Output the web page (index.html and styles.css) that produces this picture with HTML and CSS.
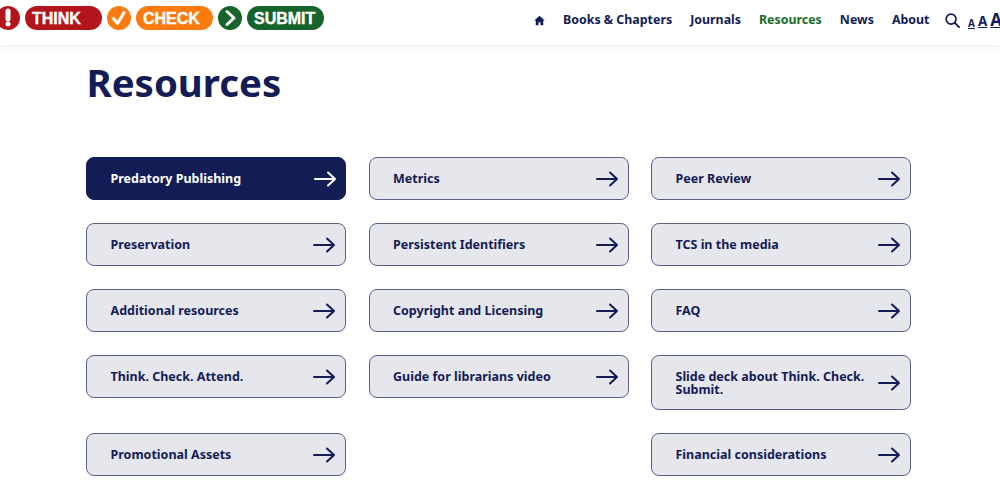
FILE: index.html
```html
<!DOCTYPE html>
<html lang="en">
<head>
    <meta charset="UTF-8">
    <meta name="viewport" content="width=device-width, initial-scale=1.0">
    <title>Resources</title>
    <link rel="stylesheet" href="styles.css">
</head>
<body>
    <header class="site-header">
        <div class="logo">
            <svg class="logo-icon logo-icon-first" viewBox="0 0 24 24"><circle cx="12" cy="12" r="12" fill="#b2151b"/><path d="M12 5v8" stroke="#fff" stroke-width="5" stroke-linecap="round"/><circle cx="12" cy="18" r="2.5" fill="#fff"/></svg>
            <span class="logo-pill think">THINK</span>
            <svg class="logo-icon" viewBox="0 0 24 24"><circle cx="12" cy="12" r="12" fill="#fd7a0e"/><path d="M6.5 12.5l4 5L17 6.5" fill="none" stroke="#fff" stroke-width="3" stroke-linecap="round" stroke-linejoin="round"/></svg>
            <span class="logo-pill check">CHECK</span>
            <svg class="logo-icon" viewBox="0 0 24 24"><circle cx="12" cy="12" r="12" fill="#17642a"/><path d="M9 5.500l7 6.500-7 6.500" fill="none" stroke="#fff" stroke-width="3" stroke-linecap="round" stroke-linejoin="round"/></svg>
            <span class="logo-pill submit">SUBMIT</span>
        </div>
        <nav class="main-nav">
            <a class="nav-home" href="#"><svg viewBox="0 0 12 12" width="11" height="11"><path d="M6 .8L.3 6h1.600v5.200h3V7.800h2.200v3.400h3V6h1.600z" fill="#131c55"/></svg></a>
            <a href="#">Books &amp; Chapters</a>
            <a href="#">Journals</a>
            <a class="active" href="#">Resources</a>
            <a href="#">News</a>
            <a href="#">About</a>
        </nav>
        <div class="tools">
            <svg class="search-icon" viewBox="0 0 16 16" width="15" height="15"><circle cx="6.500" cy="6.500" r="5.300" fill="none" stroke="#131c55" stroke-width="1.800"/><path d="M10.500 10.500L15 15" stroke="#131c55" stroke-width="2" stroke-linecap="round"/></svg>
            <a class="size size-s" href="#">A</a>
            <a class="size size-m" href="#">A</a>
            <a class="size size-l" href="#">A</a>
        </div>
    </header>

    <main class="content">
        <h1>Resources</h1>
        <div class="link-grid">
            <a class="link-card selected" href="#"><span>Predatory Publishing</span><svg viewBox="0 0 24 16"><path d="M2 8h20M15 1.500L22 8l-7 6.500"/></svg></a>
            <a class="link-card" href="#"><span>Metrics</span><svg viewBox="0 0 24 16"><path d="M2 8h20M15 1.500L22 8l-7 6.500"/></svg></a>
            <a class="link-card" href="#"><span>Peer Review</span><svg viewBox="0 0 24 16"><path d="M2 8h20M15 1.500L22 8l-7 6.500"/></svg></a>
            <a class="link-card" href="#"><span>Preservation</span><svg viewBox="0 0 24 16"><path d="M2 8h20M15 1.500L22 8l-7 6.500"/></svg></a>
            <a class="link-card" href="#"><span>Persistent Identifiers</span><svg viewBox="0 0 24 16"><path d="M2 8h20M15 1.500L22 8l-7 6.500"/></svg></a>
            <a class="link-card" href="#"><span>TCS in the media</span><svg viewBox="0 0 24 16"><path d="M2 8h20M15 1.500L22 8l-7 6.500"/></svg></a>
            <a class="link-card" href="#"><span>Additional resources</span><svg viewBox="0 0 24 16"><path d="M2 8h20M15 1.500L22 8l-7 6.500"/></svg></a>
            <a class="link-card" href="#"><span>Copyright and Licensing</span><svg viewBox="0 0 24 16"><path d="M2 8h20M15 1.500L22 8l-7 6.500"/></svg></a>
            <a class="link-card" href="#"><span>FAQ</span><svg viewBox="0 0 24 16"><path d="M2 8h20M15 1.500L22 8l-7 6.500"/></svg></a>
            <a class="link-card" href="#"><span>Think. Check. Attend.</span><svg viewBox="0 0 24 16"><path d="M2 8h20M15 1.500L22 8l-7 6.500"/></svg></a>
            <a class="link-card" href="#"><span>Guide for librarians video</span><svg viewBox="0 0 24 16"><path d="M2 8h20M15 1.500L22 8l-7 6.500"/></svg></a>
            <a class="link-card" href="#"><span>Slide deck about Think. Check. Submit.</span><svg viewBox="0 0 24 16"><path d="M2 8h20M15 1.500L22 8l-7 6.500"/></svg></a>
            <a class="link-card" href="#"><span>Promotional Assets</span><svg viewBox="0 0 24 16"><path d="M2 8h20M15 1.500L22 8l-7 6.500"/></svg></a>
            <div class="grid-blank"></div>
            <a class="link-card" href="#"><span>Financial considerations</span><svg viewBox="0 0 24 16"><path d="M2 8h20M15 1.500L22 8l-7 6.500"/></svg></a>
        </div>
    </main>
</body>
</html>
```

FILE: styles.css
```css
html, body {
    height: 100%;
}
body {
    font-family: "Noto Sans", Arial, sans-serif;
    background-color: #fff;
    color: #131c55;
    margin: 0;
    overflow: hidden;
}
a {
    color: inherit;
    text-decoration: none;
}
.site-header {
    height: 45px;
    box-sizing: border-box;
    padding: 6px 0 0 0;
    display: flex;
    align-items: flex-start;
    box-shadow: 0 2px 6px rgba(0, 0, 0, 0.06);
}
.logo {
    display: flex;
    align-items: center;
    gap: 5px;
    margin-left: -4px;
}
.logo-icon {
    width: 24px;
    height: 24px;
    flex: none;
}
.logo-pill {
    width: 77px;
    height: 24px;
    border-radius: 12px;
    box-sizing: border-box;
    padding-left: 7px;
    font-family: "Liberation Sans", Arial, sans-serif;
    font-weight: 700;
    font-size: 16px;
    line-height: 25px;
    color: #fff;
    -webkit-text-stroke: 0.4px #fff;
}
.think {
    background-color: #b2151b;
}
.check {
    background-color: #fd7a0e;
}
.submit {
    background-color: #17642a;
}
.main-nav {
    margin-left: auto;
    margin-top: 1px;
    display: flex;
    align-items: center;
    gap: 18px;
    height: 26px;
    font-size: 12.400px;
    font-weight: 700;
    line-height: 26px;
}
.nav-home {
    display: flex;
}
.main-nav .active {
    color: #1a6b2c;
}
.tools {
    display: flex;
    align-items: flex-end;
    height: 26px;
    margin-left: 15.500px;
    width: 55px;
    flex: none;
    font-weight: 700;
    overflow: hidden;
}
.search-icon {
    margin-right: 8px;
    margin-bottom: 4px;
    flex: none;
}
.size {
    text-decoration: underline;
    line-height: 1;
    margin-right: 3px;
    margin-bottom: 4px;
}
.size-s {
    font-size: 10px;
}
.size-m {
    font-size: 13.500px;
}
.size-l {
    font-size: 17px;
}
.content {
    padding: 0 89px 0 86px;
}
h1 {
    font-size: 38.400px;
    font-weight: 700;
    line-height: 52px;
    margin: 11px 0 49px 0.500px;
}
.link-grid {
    display: grid;
    grid-template-columns: repeat(3, 260px);
    column-gap: 22.500px;
    row-gap: 23px;
    align-items: start;
}
.link-card {
    display: flex;
    align-items: center;
    justify-content: space-between;
    box-sizing: border-box;
    min-height: 43px;
    padding: 13.500px 9px 13.500px 23.500px;
    background-color: #e6e7ed;
    border: 1px solid #5b6088;
    border-radius: 8px;
    font-size: 12.500px;
    font-weight: 700;
    line-height: 13px;
}
.link-card svg {
    width: 24px;
    height: 16px;
    flex: none;
    margin: -2px 0 -2px 8px;
    fill: none;
    stroke: #131c55;
    stroke-width: 2;
    stroke-linecap: round;
    stroke-linejoin: round;
}
.link-card.selected {
    background-color: #131c55;
    border-color: #131c55;
    color: #fff;
}
.link-card.selected svg {
    stroke: #fff;
    transform: translateX(1px);
}
```
